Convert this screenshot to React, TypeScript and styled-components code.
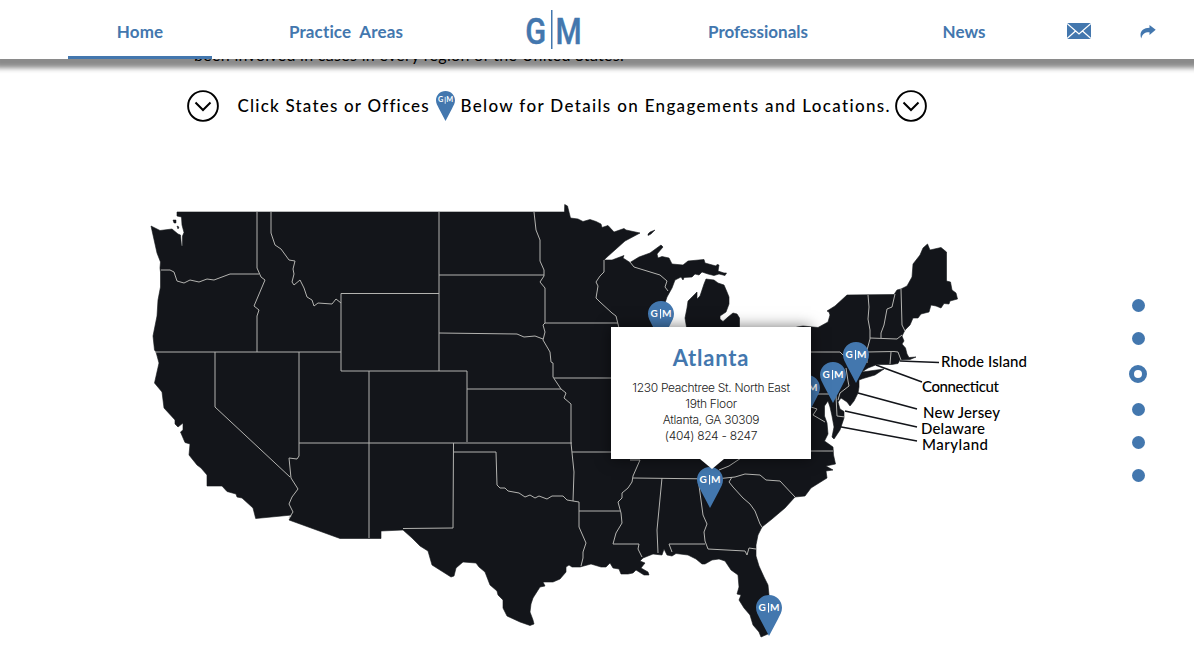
import React from "react";
import styled, { createGlobalStyle, css } from "styled-components";

const BLUE = "#4377ae";
const INK = "#13151a";
const DISPLAY = '"Lato", "Liberation Sans", sans-serif';

const GlobalStyle = createGlobalStyle`
  * { box-sizing: border-box; }
  body { margin: 0; background: #fff; font-family: ${DISPLAY}; overflow: hidden; }
`;

const Page = styled.div`
  position: relative;
  height: 670px;
  overflow: hidden;
  display: flex;
  flex-direction: column;
`;

const Header = styled.header`
  position: relative;
  z-index: 5;
  flex: none;
  display: grid;
  grid-template-columns: 144px 268px 148px 260px 152px 78px 60px;
  height: 59px;
  padding-left: 68px;
  background: #fff;
  box-shadow: 0 4px 5px 5px rgba(0, 0, 0, 0.46);
`;

const NavItem = styled.a<{ $active?: boolean; $spacing?: number }>`
  display: flex;
  align-items: center;
  justify-content: center;
  padding-top: 7px;
  color: ${BLUE};
  font-size: 17px;
  font-weight: 700;
  white-space: pre;
  letter-spacing: ${(p) => p.$spacing ?? 0}px;
  border-bottom: 3px solid ${(p) => (p.$active ? BLUE : "transparent")};
`;

const HeaderSlot = styled.div<{ $drop?: number }>`
  display: flex;
  align-items: center;
  justify-content: center;
  padding-top: ${(p) => p.$drop ?? 0}px;
  svg { display: block; }
`;

const Main = styled.main`
  display: flex;
  flex-direction: column;
  margin-top: -14px;
`;

const Intro = styled.p`
  margin: 0 0 0 194px;
  height: 20px;
  line-height: 20px;
  font-size: 16px;
  letter-spacing: 0.3px;
  color: #000;
  white-space: nowrap;
`;

const Hint = styled.div`
  display: flex;
  align-items: center;
  height: 32px;
  margin: 25px 0 0 187px;
  color: #000;
  svg { flex: none; display: block; }
`;

const HintText = styled.span<{ $width: number; $lead: number; $spacing: number }>`
  width: ${(p) => p.$width}px;
  padding-left: ${(p) => p.$lead}px;
  font-size: 17px;
  font-weight: 500;
  line-height: 20px;
  letter-spacing: ${(p) => p.$spacing}px;
  white-space: nowrap;
`;

const MapStage = styled.section`
  position: relative;
  width: 900px;
  height: 450px;
  margin: 78px 0 0 140px;
  > svg { display: block; }
`;

const PinSpot = styled.div<{ $x: number; $y: number }>`
  position: absolute;
  left: ${(p) => p.$x - 140}px;
  top: ${(p) => p.$y - 200}px;
  svg { display: block; }
`;

const Popup = styled.div`
  position: absolute;
  left: 471px;
  top: 127px;
  width: 200px;
  height: 132px;
  padding-top: 17px;
  background: #fff;
  text-align: center;
  box-shadow: 0 0 14px rgba(0, 0, 0, 0.55);
  &::after {
    content: "";
    position: absolute;
    top: 132px;
    left: 89px;
    border: solid transparent;
    border-width: 10px 12px 0;
    border-top-color: #fff;
  }
`;

const City = styled.h2`
  margin: 0 0 9px;
  color: ${BLUE};
  font-size: 22px;
  line-height: 27px;
  font-weight: 700;
  letter-spacing: 0.8px;
`;

const Address = styled.address`
  font: 300 12px/16px "Inter", "Liberation Sans", sans-serif;
  letter-spacing: -0.3px;
  color: #222;
`;

const Dots = styled.nav`
  position: absolute;
  right: 46px;
  top: 299px;
  display: flex;
  flex-direction: column;
  align-items: center;
  gap: 20px;
  width: 20px;
`;

const Dot = styled.span<{ $current?: boolean }>`
  width: 13px;
  height: 13px;
  border-radius: 50%;
  background: ${BLUE};
  ${(p) =>
    p.$current &&
    css`
      width: 18px;
      height: 18px;
      background: #fff;
      border: 5px solid ${BLUE};
    `}
`;

const Logo = () => (
  <svg width="58" height="48" viewBox="0 -4 58 48" fill={BLUE} stroke={BLUE} fontFamily="Roboto" fontWeight="500" fontSize="26">
    <text strokeWidth="0.300" transform="translate(0.300 33.500) scale(1.180 1.430)">G</text>
    <rect x="26" y="0" width="1.500" height="39" stroke="none" />
    <text strokeWidth="0.300" transform="translate(30.500 33.500) scale(1.150 1.430)">M</text>
  </svg>
);

const Mail = () => (
  <svg width="24" height="16" viewBox="0 0 24 16">
    <rect width="24" height="16" fill={BLUE} />
    <path d="M0 .5 12 11 24 .5M0 15.500 8.500 8M24 15.500 15.500 8" fill="none" stroke="#fff" strokeWidth="1.300" />
  </svg>
);

const Share = () => (
  <svg width="16" height="14" viewBox="0 0 16 14">
    <path d="M9.500 0 15.700 4.800 9.500 10V7.200C5 7 2.500 8.500 1.200 13.500-1 7 2.500 2.800 9.500 2.700Z" fill={BLUE} />
  </svg>
);

const Chevron = () => (
  <svg width="32" height="32" viewBox="0 0 32 32" fill="none" stroke="#000">
    <circle cx="16" cy="16" r="14.900" strokeWidth="1.900" />
    <path d="M8.500 12.500 16 20 23.500 12.500" strokeWidth="2" />
  </svg>
);

const Pin = ({ width = 26 }: { width?: number }) => (
  <svg width={width} height={(width * 41) / 26} viewBox="0 0 26 41">
    <path d="M13 0C5.500 0 0 5.800 0 12.800c0 4.200 2 7.200 4 11.200L13 41l9-17c2-4 4-7 4-11.200C26 5.800 20.500 0 13 0Z" fill={BLUE} />
    <g fill="#fff" stroke="none" fontFamily="Lato" fontWeight="700" fontSize="10">
      <text x="2.600" y="15.600" textLength="8">G</text>
      <rect x="12" y="8" width="1.100" height="9.500" />
      <text x="14" y="15.600" textLength="9">M</text>
    </g>
  </svg>
);

const LAND =
  "M177 212H564.500L564.700 204.500 567.500 206 570.500 218 578 219 583 221.500 590 219.500 596 221.500 601 224 602 227.500 608 225.500 614 232 624 228.500 626 230 640 233 625 241 606 258 604 260 612 260 624 255.500 623 258 630 262.500 639 257 650 253 661 245 663 247 657 254 658 258 662 256.500 669 258 672 264 683 265 688 261 704 259.500 705 263 716 266 717 264.500 719 265 718 271 724 273 726.500 273 725 275.500 719 274 714 275.500 708 274 702 272 699 275 695 274 692 277 684 277.500 683 280 681 277 675 280 672 288 667 297 664 306 665 330 680 345 687 330 685 318 687 308 688 301 694 295 697 292 697 299 700 296 703 287 704 284 706 279 714 280 718 283 724 285 727 292 729 297 729 304 726 312 720 316 720 319 723 321.500 728 317 733 313 737 314 739.500 318 739.500 332 760 345 797 327 803 326 818 327.500 828 322 830 315 829 312 827 311 835 306 847 295 894 294.500 897 290 901 289 907 286 912 277 913 264 920 255 923 248 927.500 244 930 250 941 247.500 946.500 252 946.500 281 950.500 282 952 290 956 293 957.500 299 950 301 949 304 944 303.500 941 308 936 306 931 305 929 312 921 314 918 318 913 318 910 325 905 330 902 336 904 341 902 344 905.500 348 907 354 909 357.500 916 357 910 359.500 900 360 898 363.500 892 364.500 877 364.500 868 368 862 372 873 370.500 884 369 875 375 863 378.500 859 380 859 387 858 393 854 401 850 406 847 402 841 398 838 402 840 409 844 411.500 844 418 840 430 834 439 832 437 834 427 832 416 830 407 828 401 824.500 406 824.500 416 827 423 828 434 824.500 441 833 447 833.500 455 835.500 464 826 466 833 470 826 471 827 478 819 483 811 488 805 496 795 497 785 508 772 519 762 527 758 535 756 545 756 556 759 566 764 577 768 585 769 595 772 610 770 625 768 634 761 637 759 632 753 625 750 615 744 608 739 600 741 595 737 594 739 587 738 575 731 570 725 561 719 559 712 560 705 564 702 564 696 559 688 555 676 553.500 672 556 667 555 664 549 662 555 653 554 643 558 640 561 645 563 641 568 648 572 649 575 644 575 636 570 633 573 628 574 621 574 619 569 613 568 610 563 606 567 601 567 591 564 580 567 572 567 569 565 566 567 566 572 560 579 553 582 543 582 545 586 540 587 533 598 531 604 530 612 533 620 534 624 530 625.500 520 622 507 616 503 608 503 600 498 595 497 591 490 585 485 572 479 567 476 563 463 562 456 568 454 576 451 577 432 565 428 551 420 546 412 538 403 530 381 531V538.500H340L289 520 292 515 255.700 518.500 253 508 242 498 237 497 236 494 227 491.500 222 486 207 486 207 475 201 468 197 465 189 455 190 444 185 442.500 180.500 432 183 430 183 423 178 427 175 424 175 420 164 408 162 392 154.500 383 159 363 156 352 154.500 350 153 336 157 316 158 300 160.500 287V272L160 268 160.500 262 157 253 151 226 160 230.500 172 229 178 234 180.500 235 181.500 246 182.500 246 182.500 236 184 232.500 182 225 181.500 217 177 216Z";

const BORDERS = [
  "161 270 170 270 174 272 177 281 184 283 190 280 199 282 207 279 214 280 230 274 259 274",
  "257 212 257 268 261 277 265 280 254 306 259 310 257 316 257 352",
  "155 352 341 352",
  "271 212 271 233 275 245 281 249 289 260 295 261 293 269 294 274 292 282 294 285 300 280 304 288 307 297 312 300 314 306 318 303 332 304 336 299 341 303",
  "439 293.5 341 293.5 341 371 467 371 467 442",
  "439 212 439 371",
  "215 352 215 407 290 477",
  "299 352 299 456 297 459 289 458 291 478 298 489 292 497 289 504 293 512 289 518",
  "299 443 572 443",
  "369 371 369 538",
  "439 275 544 275",
  "439 333 517 334 524 337 535 336 543 339",
  "467 389 561 389",
  "534 212 536 230 540 240 540 261 544 270 544 276 540 282 545 288 545 323 543 325 545 332 543 340 550 352 551 362 553 363 553 377 561 389 566 393 564 398 571 404 571 443 574 472 573 501",
  "545 323 618 323",
  "554 378 612 378",
  "604 260 604 272 600 276 596 282 598 286 596 298 600 302 612 313 616 316 620 332",
  "630 262 634 267 660 275 667 281 665 287 668 291",
  "453.5 443 453 528 403 528.5",
  "454 452 496 452 497 485 500 488 505 488 508 491 519 493 525 497 530 495 535 498 539 496 547 499 552 496 563 496 567 500 573 501 579 502 579 527 586 543 583 552 583 558 581 566",
  "572 452 612 452",
  "579 511 620 511",
  "630 460 640 460 633 476 632 482 628 488 622 493 622 498 618 502 621 513 622 523 616 533 613 544 639 544 638 549 642 557",
  "633 478 716 479 735 477 745 474 760 475 766 480 780 481 795 497",
  "662 478 657 530 658 553",
  "698 478 703 515 707 524 704 532 705 541 708 549 745 551 747 555 749 548 756 549",
  "705 544 669 544 672 552",
  "732 477 729 482 733 487 743 498 750 504 755 511 760 524 762 527",
  "719 470 729 466 738 460 743 457",
  "811 451 833 451",
  "811 352 840 352 845 357",
  "868 295 869 307 868 319 870 330 870 339 867 350 867 363",
  "895 294 892 307 887 309 884 325 881 333 881 338",
  "901 289 902 325 905 331",
  "870 338 897 339 902 335",
  "867 352 894 351.5 898 352 901 360",
  "891 352 890 364",
  "846 368 848 381 849 386 840 393 838 400",
  "811 394 836 394",
  "836 396 837 416 845 417",
  "811 407 817 409 813 415 825 422",
];

const LABELS = [
  { name: "Rhode Island", x: 941, y: 366.5, w: 86, line: "900 361 939 362.5" },
  { name: "Connecticut", x: 922, y: 392, w: 77, line: "876 365 922 382" },
  { name: "New Jersey", x: 923, y: 417.5, w: 77, line: "858 393 917 409" },
  { name: "Delaware", x: 921, y: 433.5, w: 64, line: "845 411 917 427" },
  { name: "Maryland", x: 922, y: 449.5, w: 66, line: "836 426 917 441" },
];

const UsMap = () => (
  <svg width="900" height="450" viewBox="140 200 900 450">
    <path d={LAND} fill={INK} stroke={INK} strokeWidth="0.600" strokeLinejoin="round" />
    <path d="M648 234 650 232 655 230 651 234 648 235.500ZM173 220 176 220 176 223 174 223ZM177 226 179 227 178 229Z" fill={INK} stroke={INK} strokeWidth="0.500" />
    <g fill="none" stroke="#b3b3b0" strokeWidth="1" strokeLinejoin="round">
      {BORDERS.map((points) => (
        <polyline key={points} points={points} />
      ))}
    </g>
    {LABELS.map((l) => (
      <g key={l.name}>
        <polyline points={l.line} stroke={INK} strokeWidth="1.600" />
        <text x={l.x} y={l.y} textLength={l.w} fontFamily="Lato" fontWeight="500" fontSize="15" fill="#000">
          {l.name}
        </text>
      </g>
    ))}
  </svg>
);

const OFFICES = [
  [648, 301],
  [794, 375],
  [820, 362],
  [843, 342],
  [697, 467],
  [756, 595],
];

export default function App() {
  return (
    <Page>
      <GlobalStyle />
      <Header>
        <NavItem $active $spacing={0.2}>Home</NavItem>
        <NavItem $spacing={0.15}>{"Practice  Areas"}</NavItem>
        <HeaderSlot><Logo /></HeaderSlot>
        <NavItem>Professionals</NavItem>
        <NavItem>News</NavItem>
        <HeaderSlot $drop={3}><Mail /></HeaderSlot>
        <HeaderSlot $drop={4}><Share /></HeaderSlot>
      </Header>
      <Main>
        <Intro>been involved in cases in every region of the United States.</Intro>
        <Hint>
          <Chevron />
          <HintText $width={217} $lead={18.5} $spacing={1.2}>
            Click States or Offices
          </HintText>
          <Pin width={19} />
          <HintText $width={440} $lead={5.5} $spacing={1.33}>
            Below for Details on Engagements and Locations.
          </HintText>
          <Chevron />
        </Hint>
        <MapStage>
          <UsMap />
          {OFFICES.map(([x, y]) => (
            <PinSpot key={x} $x={x} $y={y}>
              <Pin />
            </PinSpot>
          ))}
          <Popup>
            <City>Atlanta</City>
            <Address>
              1230 Peachtree St. North East
              <br />
              19th Floor
              <br />
              Atlanta, GA 30309
              <br />
              (404) 824 - 8247
            </Address>
          </Popup>
        </MapStage>
      </Main>
      <Dots>
        {[0, 1, 2, 3, 4, 5].map((i) => (
          <Dot key={i} $current={i === 2} />
        ))}
      </Dots>
    </Page>
  );
}
